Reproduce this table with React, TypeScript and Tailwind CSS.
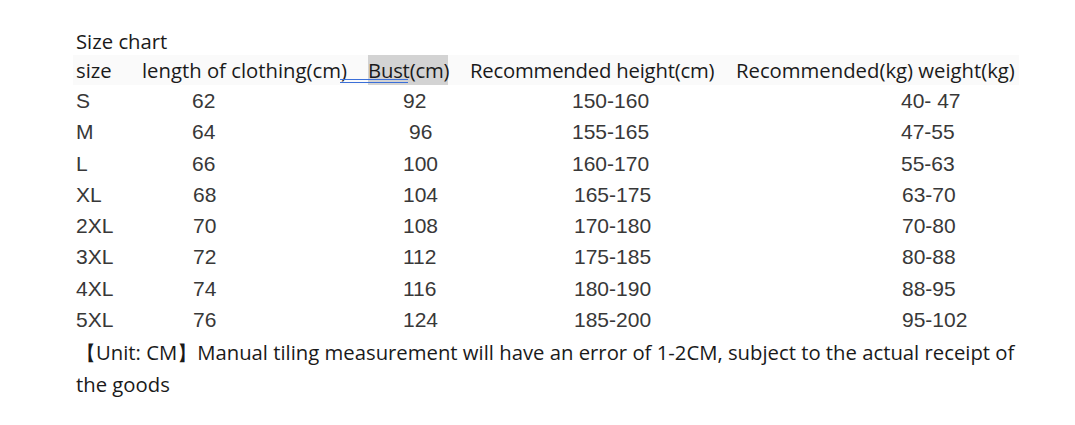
import React from "react";

const rows: [string, string, string, string, string, number[]][] = [
  ["S", "62", "92", "150-160", "40- 47", [0, 0, 0, 0]],
  ["M", "64", "96", "155-165", "47-55", [-3, 6, -2, -3]],
  ["L", "66", "100", "160-170", "55-63", [0, -2, 0, 0]],
  ["XL", "68", "104", "165-175", "63-70", [1, 0, 2, 1]],
  ["2XL", "70", "108", "170-180", "70-80", [1, 0, 2, 1]],
  ["3XL", "72", "112", "175-185", "80-88", [1, 0, 2, 1]],
  ["4XL", "74", "116", "180-190", "88-95", [1, 0, 2, 1]],
  ["5XL", "76", "124", "185-200", "95-102", [1, 0, 2, 1]],
];

export default function App() {
  return (
    <div
      className="w-[1075px] h-[425px] bg-white text-[#1a1a1a] pt-[27px]"
      style={{ fontFamily: '"Open Sans", "Noto Sans", sans-serif' }}
    >
      <div className="pl-[76px] text-[20.3px] leading-[28px]">Size chart</div>
      <div className="ml-[73px] w-[946px] h-[30px] bg-[#fafafa] flex items-center text-[20.3px] relative whitespace-nowrap">
        <span className="ml-[3px] w-[66px]">size</span>
        <span className="w-[226px]">length of clothing(cm)</span>
        <span className="bg-[#d3d3d3] h-[30px] flex items-center w-[80px] tracking-[-0.2px]">Bust(cm)</span>
        <span className="ml-[22px] w-[266px] tracking-[-0.2px]">Recommended height(cm)</span>
        <span>Recommended(kg) weight(kg)</span>
        <div className="absolute left-[267px] top-[24px] w-[68px] h-[4px] border-y border-[#3b6fd8]" />
      </div>
      <div
        className="text-[21px] text-[#383838]"
        style={{ fontFamily: '"Liberation Sans", "Noto Sans CJK SC", sans-serif' }}
      >
        {rows.map((r) => (
          <div key={r[0]} className="h-[31.3px] flex items-center pl-[76px] whitespace-pre">
            <span className="w-[116px]">{r[0]}</span>
            <span className="w-[211px]" style={{ paddingLeft: r[5][0] }}>{r[1]}</span>
            <span className="w-[169px]" style={{ paddingLeft: r[5][1] }}>{r[2]}</span>
            <span className="w-[329px]" style={{ paddingLeft: r[5][2] }}>{r[3]}</span>
            <span style={{ paddingLeft: r[5][3] }}>{r[4]}</span>
          </div>
        ))}
      </div>
      <div className="ml-[76px] w-[943px] text-[20.3px] leading-[32px] mt-[1px]">
        【Unit: CM】Manual tiling measurement will have an error of 1-2CM, subject to the actual receipt of the goods
      </div>
    </div>
  );
}
